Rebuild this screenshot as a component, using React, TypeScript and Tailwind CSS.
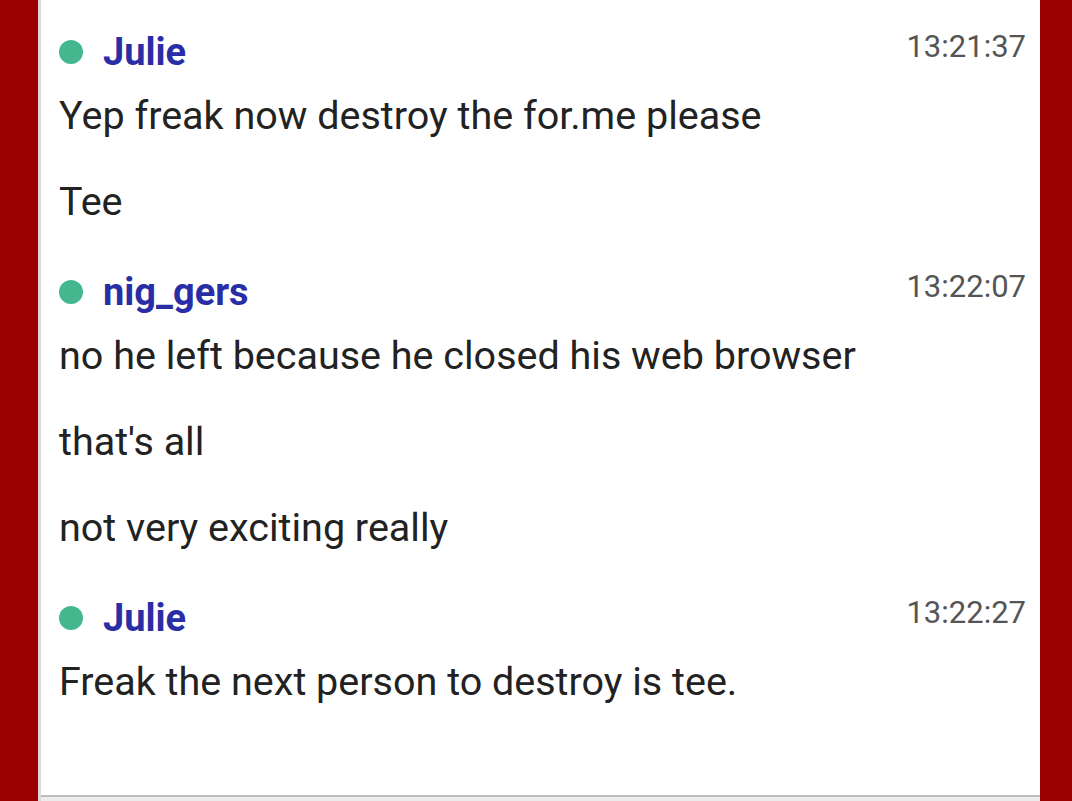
const messages = [
  { name: 'Julie', time: '13:21:37', lines: ['Yep freak now destroy the for.me please', 'Tee'] },
  {
    name: 'nig_gers',
    time: '13:22:07',
    lines: ['no he left because he closed his web browser', "that's all", 'not very exciting really'],
  },
  { name: 'Julie', time: '13:22:27', lines: ['Freak the next person to destroy is tee.'] },
];

export default function App() {
  return (
    <div className="flex h-[801px] w-[1072px] overflow-hidden bg-[#9a0000] font-['Roboto',sans-serif]">
      <div className="flex w-[1002px] ml-[38px] flex-col border-l-[3px] border-[#d9d9d9]">
        <div className="flex h-[795px] flex-col gap-[46px] bg-white pl-[18px] pr-[14px] pt-[30px]">
          {messages.map((m, i) => (
            <div key={i} className="flex flex-col">
              <div className="flex h-[44px] items-center justify-between">
                <div className="flex items-center gap-[20px]">
                  <span className="h-[24px] w-[24px] rounded-full bg-[#44b78f]" />
                  <span className="text-[38px] font-bold leading-[44px] text-[#2a2ea6]">{m.name}</span>
                </div>
                <span className="-mt-[10px] text-[31px] leading-[44px] text-[#555555]">{m.time}</span>
              </div>
              <div className="mt-[20px] flex flex-col gap-[42px]">
                {m.lines.map((l, j) => (
                  <p key={j} className="text-[39.5px] leading-[44px] text-[#222222]">
                    {l}
                  </p>
                ))}
              </div>
            </div>
          ))}
        </div>
        <div className="h-[2px] bg-[#bdbdbd]" />
        <div className="flex-1 bg-[#ececec]" />
      </div>
    </div>
  );
}
